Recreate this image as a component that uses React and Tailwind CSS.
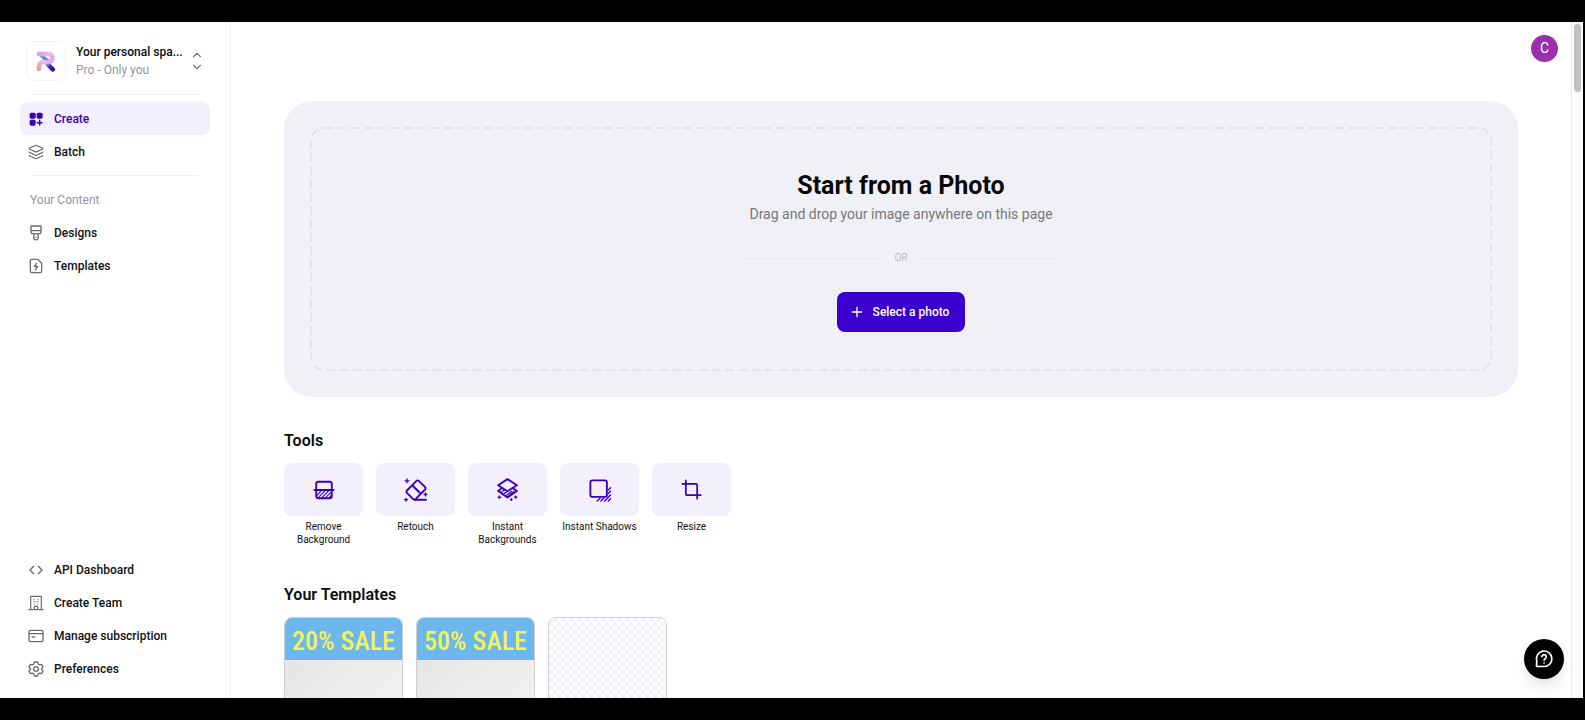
import React from 'react';
import { ChevronUp, ChevronDown, Layers, Plus } from 'lucide-react';

const Icon = ({ size = 16, stroke = 1.8, className = '', children }) => (
  <svg
    width={size}
    height={size}
    viewBox="0 0 24 24"
    fill="none"
    stroke="currentColor"
    strokeWidth={stroke}
    strokeLinecap="round"
    strokeLinejoin="round"
    aria-hidden="true"
    className={`shrink-0 ${className}`}
  >
    {children}
  </svg>
);

const CreateIcon = () => (
  <Icon>
    <g fill="currentColor" stroke="none">
      <rect x="2.5" y="2.5" width="9" height="9" rx="2.4" />
      <rect x="13" y="2.5" width="9" height="9" rx="2.4" />
      <rect x="2.5" y="13" width="9" height="9" rx="2.4" />
    </g>
    <path d="M17.5 14v7M14 17.5h7" strokeWidth="2.2" />
  </Icon>
);

const BatchIcon = () => <Layers size={16} strokeWidth={1.8} className="shrink-0" />;

const DesignsIcon = () => (
  <Icon stroke={2}>
    <path d="M4.500 1.500h15v9.500a2 2 0 0 1-2 2h-11a2 2 0 0 1-2-2zM4.500 8.500h15" />
    <path d="M9 13v2.700c0 .8-.6 1.400-.6 2.900a3.600 3.600 0 0 0 7.200 0c0-1.500-.6-2.100-.6-2.900V13M12 18.500v.1" />
  </Icon>
);

const TemplatesIcon = () => (
  <Icon stroke={2}>
    <path d="M14.500 2H6a2.500 2.500 0 0 0-2.500 2.500v15A2.500 2.500 0 0 0 6 22h12a2.500 2.500 0 0 0 2.500-2.500V8z" />
    <path d="M12.800 8l-3.300 4.800h5L11.200 17.500" />
  </Icon>
);

const CodeIcon = () => (
  <Icon stroke={2}>
    <path d="M8.500 6.500L3 12l5.500 5.500M15.500 6.500L21 12l-5.500 5.500" />
  </Icon>
);

const TeamIcon = () => (
  <Icon stroke={1.8}>
    <path d="M4 22V2h16v20M1.500 22h21M9.500 22v-5h5v5" />
    <path d="M9 6.500h.1M15 6.500h.1M9 10h.1M12 10h.1M15 10h.1M9 13.500h.1M15 13.500h.1" />
  </Icon>
);

const CardIcon = () => (
  <Icon stroke={2}>
    <rect x="1.500" y="3.500" width="21" height="17" rx="2.500" />
    <path d="M1.500 8.500h21M6 13.500h4" />
  </Icon>
);

const GearIcon = () => (
  <Icon stroke={2}>
    <path d="M9.700 1.500h4.600l1 3.200 1.700 1 3.200-.7 2.300 4-2.200 2.500v1l2.200 2.500-2.300 4-3.200-.7-1.700 1-1 3.200H9.700l-1-3.200-1.700-1-3.200.7-2.300-4 2.200-2.500v-1L1.500 9l2.300-4 3.200.7 1.700-1z" />
    <circle cx="12" cy="12" r="3.500" />
  </Icon>
);

const RemoveBackgroundIcon = () => (
  <Icon size={22} stroke={2}>
    <rect x="3.500" y="3" width="17" height="18" rx="2.500" />
    <path d="M1.500 12h21" />
    <path d="M4.500 17.500l5-5M5.500 20.500l8-8M9.500 20.500l8-8M13.500 20.500l6.500-6.500M17.500 20.500l2.500-2.500" strokeWidth="1.200" />
  </Icon>
);

const RetouchIcon = () => (
  <Icon size={24} stroke={1.9}>
    <path d="M14.800 2.900l6.300 6.300a1.600 1.600 0 0 1 0 2.300l-9.600 9.600a1.600 1.600 0 0 1-2.300 0l-6.300-6.300a1.600 1.600 0 0 1 0-2.300l9.600-9.600a1.600 1.600 0 0 1 2.300 0z" />
    <path d="M8.500 7.500l8 8M10.500 21.700H22" />
    <path d="M3 .8v4M1 2.800h4M21.500 15v3M20 16.500h3M2 20.200v3M.5 21.700h3" strokeWidth="1.300" />
  </Icon>
);

const InstantBackgroundsIcon = () => (
  <Icon size={23} stroke={2}>
    <path d="M12 1.200l9.800 6.300L12 13.800 2.200 7.500z" />
    <path d="M5.500 11.200l-3.300 2.300L12 20.300l9.800-6.800-3.300-2.300" />
    <path d="M5.500 15l3-2.500M8 16.800l3.500-2.800M10.500 18.500l5.500-4.500M13.500 18.500l5-4.500" strokeWidth="1.300" />
    <path d="M3.500 18.500v3M2 20h3M20.500 18.500v3M19 20h3M16 21.500v2M15 22.500h2" strokeWidth="1.200" />
  </Icon>
);

const InstantShadowsIcon = () => (
  <Icon size={22} stroke={2} className="overflow-visible">
    <rect x="1.500" y="1.500" width="18" height="18" rx="2" />
    <path d="M21 12l2.500-2.500M21 15.800l2.500-2.500M9 24l3-3M13 24l3-3M17 24l6.500-6.500M21 24l2.500-2.500" strokeWidth="1.500" />
  </Icon>
);

const ResizeIcon = () => (
  <Icon size={21} stroke={2}>
    <path d="M5.500 1.500V17A1.500 1.500 0 0 0 7 18.500h15.500M1.500 5.500H17A1.500 1.500 0 0 1 18.500 7v15.500" />
  </Icon>
);

const HelpIcon = () => (
  <Icon size={20} stroke={2}>
    <path d="M3 21l.3-6.500A9.300 9.300 0 1 1 12 21z" />
    <path d="M9.500 9.300a2.600 2.600 0 1 1 3.900 2.300c-.9.500-1.300.9-1.300 1.900M12.100 16.700v.1" />
  </Icon>
);

const Logo = () => (
  <svg width="20" height="21" viewBox="0 0 20 21" aria-hidden="true">
    <defs>
      <linearGradient id="bowl" gradientUnits="userSpaceOnUse" x1="0" y1="0" x2="19" y2="13">
        <stop offset="0" stopColor="#d98bdc" />
        <stop offset="0.5" stopColor="#f0b4ee" />
        <stop offset="1" stopColor="#e3a0ee" />
      </linearGradient>
      <linearGradient id="stem" gradientUnits="userSpaceOnUse" x1="2" y1="20" x2="9" y2="9">
        <stop offset="0" stopColor="#e89a92" />
        <stop offset="1" stopColor="#efc3ee" />
      </linearGradient>
      <linearGradient id="leg" gradientUnits="userSpaceOnUse" x1="10" y1="11" x2="18" y2="20">
        <stop offset="0" stopColor="#b9a2f2" />
        <stop offset="0.5" stopColor="#4630b0" />
        <stop offset="1" stopColor="#2c0d8c" />
      </linearGradient>
    </defs>
    <path d="M11.500 13l5.200 5.300" fill="none" stroke="url(#leg)" strokeWidth="4.600" strokeLinecap="round" />
    <path d="M3 18V15.500a4.500 4.500 0 0 1 4.500-4.500H10" fill="none" stroke="url(#stem)" strokeWidth="4.600" strokeLinecap="round" />
    <path d="M3 3h9.500a4 4 0 0 1 0 8H10" fill="none" stroke="url(#bowl)" strokeWidth="4.600" strokeLinecap="round" />
    <path d="M3.500 5.300h5.500l4.500 3.700H7.500z" fill="#5a8fdc" />
  </svg>
);

const mainLinks = [
  { label: 'Create', icon: CreateIcon, active: true },
  { label: 'Batch', icon: BatchIcon }
];

const contentLinks = [
  { label: 'Designs', icon: DesignsIcon },
  { label: 'Templates', icon: TemplatesIcon }
];

const footerLinks = [
  { label: 'API Dashboard', icon: CodeIcon },
  { label: 'Create Team', icon: TeamIcon },
  { label: 'Manage subscription', icon: CardIcon },
  { label: 'Preferences', icon: GearIcon }
];

const tools = [
  { label: 'Remove Background', icon: RemoveBackgroundIcon },
  { label: 'Retouch', icon: RetouchIcon },
  { label: 'Instant Backgrounds', icon: InstantBackgroundsIcon },
  { label: 'Instant Shadows', icon: InstantShadowsIcon },
  { label: 'Resize', icon: ResizeIcon }
];

const templates = [
  { id: 1, title: '20% SALE' },
  { id: 2, title: '50% SALE' },
  { id: 3 }
];

const NavList = ({ items }) => (
  <ul>
    {items.map(({ label, icon: ItemIcon, active }) => (
      <li key={label}>
        <a
          href="#"
          className={`flex h-[33px] items-center gap-2.5 rounded-lg px-2 text-[12px] font-medium ${
            active ? 'bg-[#f3effd] text-[#3a00b8]' : 'text-[#111114]'
          }`}
        >
          <span className={active ? 'text-[#3a00b8]' : 'text-[#6c6c72]'}>
            <ItemIcon />
          </span>
          {label}
        </a>
      </li>
    ))}
  </ul>
);

const Sidebar = () => (
  <aside className="flex w-[231px] shrink-0 flex-col border-r border-[#f0f0f2] px-5 pt-[19px] pb-[13px]">
    <button type="button" className="mx-1.5 flex items-center gap-2.5 text-left">
      <span className="flex size-10 shrink-0 items-center justify-center rounded-lg border border-[#f3f3f5]">
        <Logo />
      </span>
      <span className="min-w-0 flex-1 text-[12px] leading-[18px] whitespace-nowrap">
        <span className="block font-medium text-[#0c0c0e]">Your personal spa...</span>
        <span className="block text-[#96969b]">Pro - Only you</span>
      </span>
      <span className="flex shrink-0 flex-col text-[#77777c]">
        <ChevronUp size={14} strokeWidth={2} className="-my-px" />
        <ChevronDown size={14} strokeWidth={2} className="-my-px" />
      </span>
    </button>
    <hr className="mx-3 mt-[13px] mb-[7px] border-[#efeff1]" />
    <nav>
      <NavList items={mainLinks} />
      <hr className="mx-3 my-[7px] border-[#efeff1]" />
      <h2 className="flex h-[33px] items-center px-2.5 text-[12px] text-[#96969b]">Your Content</h2>
      <NavList items={contentLinks} />
    </nav>
    <nav className="mt-auto">
      <NavList items={footerLinks} />
    </nav>
  </aside>
);

const DropZone = () => (
  <section className="rounded-[28px] bg-[#f0f1f6] p-[27px]">
    <div className="relative flex flex-col items-center pt-[42px] pb-[38px]">
      {/* Dashed outline */}
      <svg className="pointer-events-none absolute inset-0 size-full overflow-visible" aria-hidden="true">
        <rect width="100%" height="100%" rx="13" fill="none" stroke="#dfdfe3" strokeWidth="1.500" strokeDasharray="9 4.300" />
      </svg>
      <h1 className="text-[25px] leading-8 font-bold text-[#08080a]">Start from a Photo</h1>
      <p className="mt-0.5 text-[14px] leading-5 text-[#77777c]">Drag and drop your image anywhere on this page</p>
      <div className="mt-[26px] flex w-[314px] items-center gap-2.5 text-[10px] leading-4 text-[#babac0]">
        <span className="h-px flex-1 bg-[#e8e8ee]" />
        OR
        <span className="h-px flex-1 bg-[#e8e8ee]" />
      </div>
      <button
        type="button"
        className="mt-[26px] flex h-10 items-center gap-2 rounded-lg bg-[#3b00cc] pr-4 pl-3 text-[12px] font-medium text-white"
      >
        <Plus size={16} strokeWidth={2} />
        Select a photo
      </button>
    </div>
  </section>
);

const Tools = () => (
  <section className="mt-8">
    <h2 className="text-[16px] leading-6 font-semibold text-[#0c0c0e]">Tools</h2>
    <ul className="mt-2.5 flex gap-[13px]">
      {tools.map(({ label, icon: ToolIcon }) => (
        <li key={label}>
          <button type="button" className="flex h-full w-[79px] flex-col items-center text-[10px] leading-[13px] text-[#111114]">
            <span className="mb-1 flex h-[53px] w-full items-center justify-center rounded-lg bg-[#f3effd] text-[#3a00b8]">
              <ToolIcon />
            </span>
            {label}
          </button>
        </li>
      ))}
    </ul>
  </section>
);

const Templates = () => (
  <section className="mt-[37px]">
    <h2 className="text-[16px] leading-6 font-semibold text-[#0c0c0e]">Your Templates</h2>
    <ul className="mt-2.5 flex gap-[13px]">
      {templates.map(({ id, title }) => (
        <li key={id}>
          <button
            type="button"
            aria-label={title || 'Blank'}
            className="flex h-[150px] w-[119px] flex-col overflow-hidden rounded-lg border border-[#cfcfd3]"
          >
            {title ? (
              <>
                <span className="flex h-[42px] w-full shrink-0 items-center justify-center bg-[#6cb8ec] pt-1 font-['Roboto_Condensed','Liberation_Sans_Narrow','Liberation_Sans',sans-serif] text-[26px] leading-none font-medium whitespace-nowrap text-[#f5f25a]">
                  {title}
                </span>
                <span className="w-full flex-1 bg-linear-to-br from-[#e6e6e6] to-[#f6f6f6]" />
              </>
            ) : (
              <span className="w-full flex-1 bg-[repeating-conic-gradient(#f3f0fa_0_25%,#ffffff_0_50%)] bg-[length:8px_8px]" />
            )}
          </button>
        </li>
      ))}
    </ul>
  </section>
);

const App = () => {
  return (
    <div className="h-screen bg-black py-[22px] pr-0.5 font-['Roboto','Inter','Liberation_Sans',sans-serif]">
      <div className="relative flex h-full overflow-hidden bg-white">
        <Sidebar />
        <main className="min-w-0 flex-1 overflow-hidden">
          <header className="flex h-[79px] justify-end p-[13px]">
            <button type="button" className="size-[27px] rounded-full bg-[#9b2fae] text-[14px] text-white">
              C
            </button>
          </header>
          <div className="px-[53px]">
            <DropZone />
            <Tools />
            <Templates />
          </div>
        </main>

        {/* Scroll track */}
        <div className="w-3 shrink-0 border-l border-[#e9e9eb] bg-[#fcfcfc] px-0.5 py-0.5">
          <div className="h-[68px] rounded-full bg-[#c1c1c1]" />
        </div>

        <button
          type="button"
          aria-label="Help"
          className="absolute right-[19px] bottom-[19px] flex size-10 items-center justify-center rounded-full bg-black text-white shadow-lg"
        >
          <HelpIcon />
        </button>
      </div>
    </div>
  );
};

export default App;
